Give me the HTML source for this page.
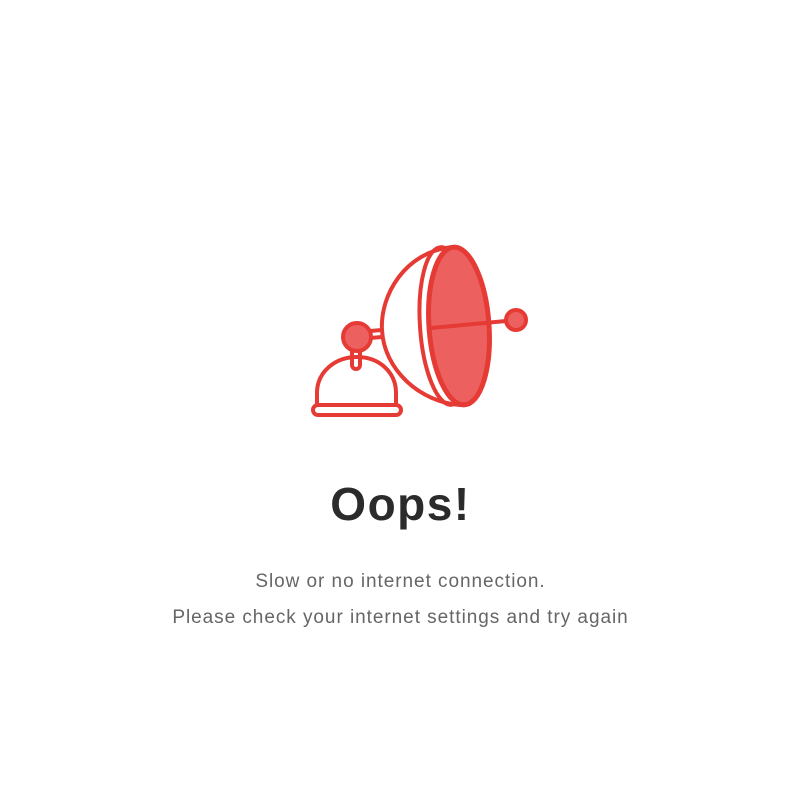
<!DOCTYPE html>
<html><head><style>
html,body{margin:0;background:#fff;width:801px;height:801px;overflow:hidden;font-family:"Liberation Sans",sans-serif;}
svg{position:absolute;left:0;top:0}
h1{position:absolute;top:476px;left:0;width:801px;text-align:center;margin:0;font-size:46px;font-weight:bold;color:#2b2b2b;line-height:56px;letter-spacing:1.5px}
p{position:absolute;left:0;width:801px;text-align:center;margin:0;font-size:19px;color:#666;line-height:24px;letter-spacing:0.95px}
</style></head><body>
<svg width="801" height="801">
<g stroke="#e63a35" stroke-width="4" fill="none" stroke-linecap="round" stroke-linejoin="round">
<path d="M452 247 C405 252 380 295 382 330 C384 370 420 402 460 405"/>
<ellipse cx="446" cy="326" rx="26" ry="79" transform="rotate(-4 446 326)"/>
<ellipse cx="459" cy="326" rx="30" ry="79" fill="#ec6060" stroke-width="5" transform="rotate(-4 459 326)"/>
<line x1="431" y1="328" x2="506" y2="321"/>
<circle cx="516" cy="320" r="10" fill="#ec6060"/>
<line x1="370" y1="331" x2="382" y2="330"/>
<line x1="370" y1="338" x2="382" y2="337"/>
<rect x="352" y="346" width="8" height="23" rx="4" fill="#fff"/>
<circle cx="357" cy="337" r="14" fill="#ec6060"/>
<path d="M317 405 L317 393 C317 372 335 357 357 357 C379 357 396 372 396 393 L396 405"/>
<rect x="313" y="405" width="88" height="10" rx="5" fill="#fff"/>
</g>
</svg>
<h1>Oops!</h1>
<p style="top:570px">Slow or no internet connection.</p>
<p style="top:606px">Please check your internet settings and try again</p>
</body></html>
